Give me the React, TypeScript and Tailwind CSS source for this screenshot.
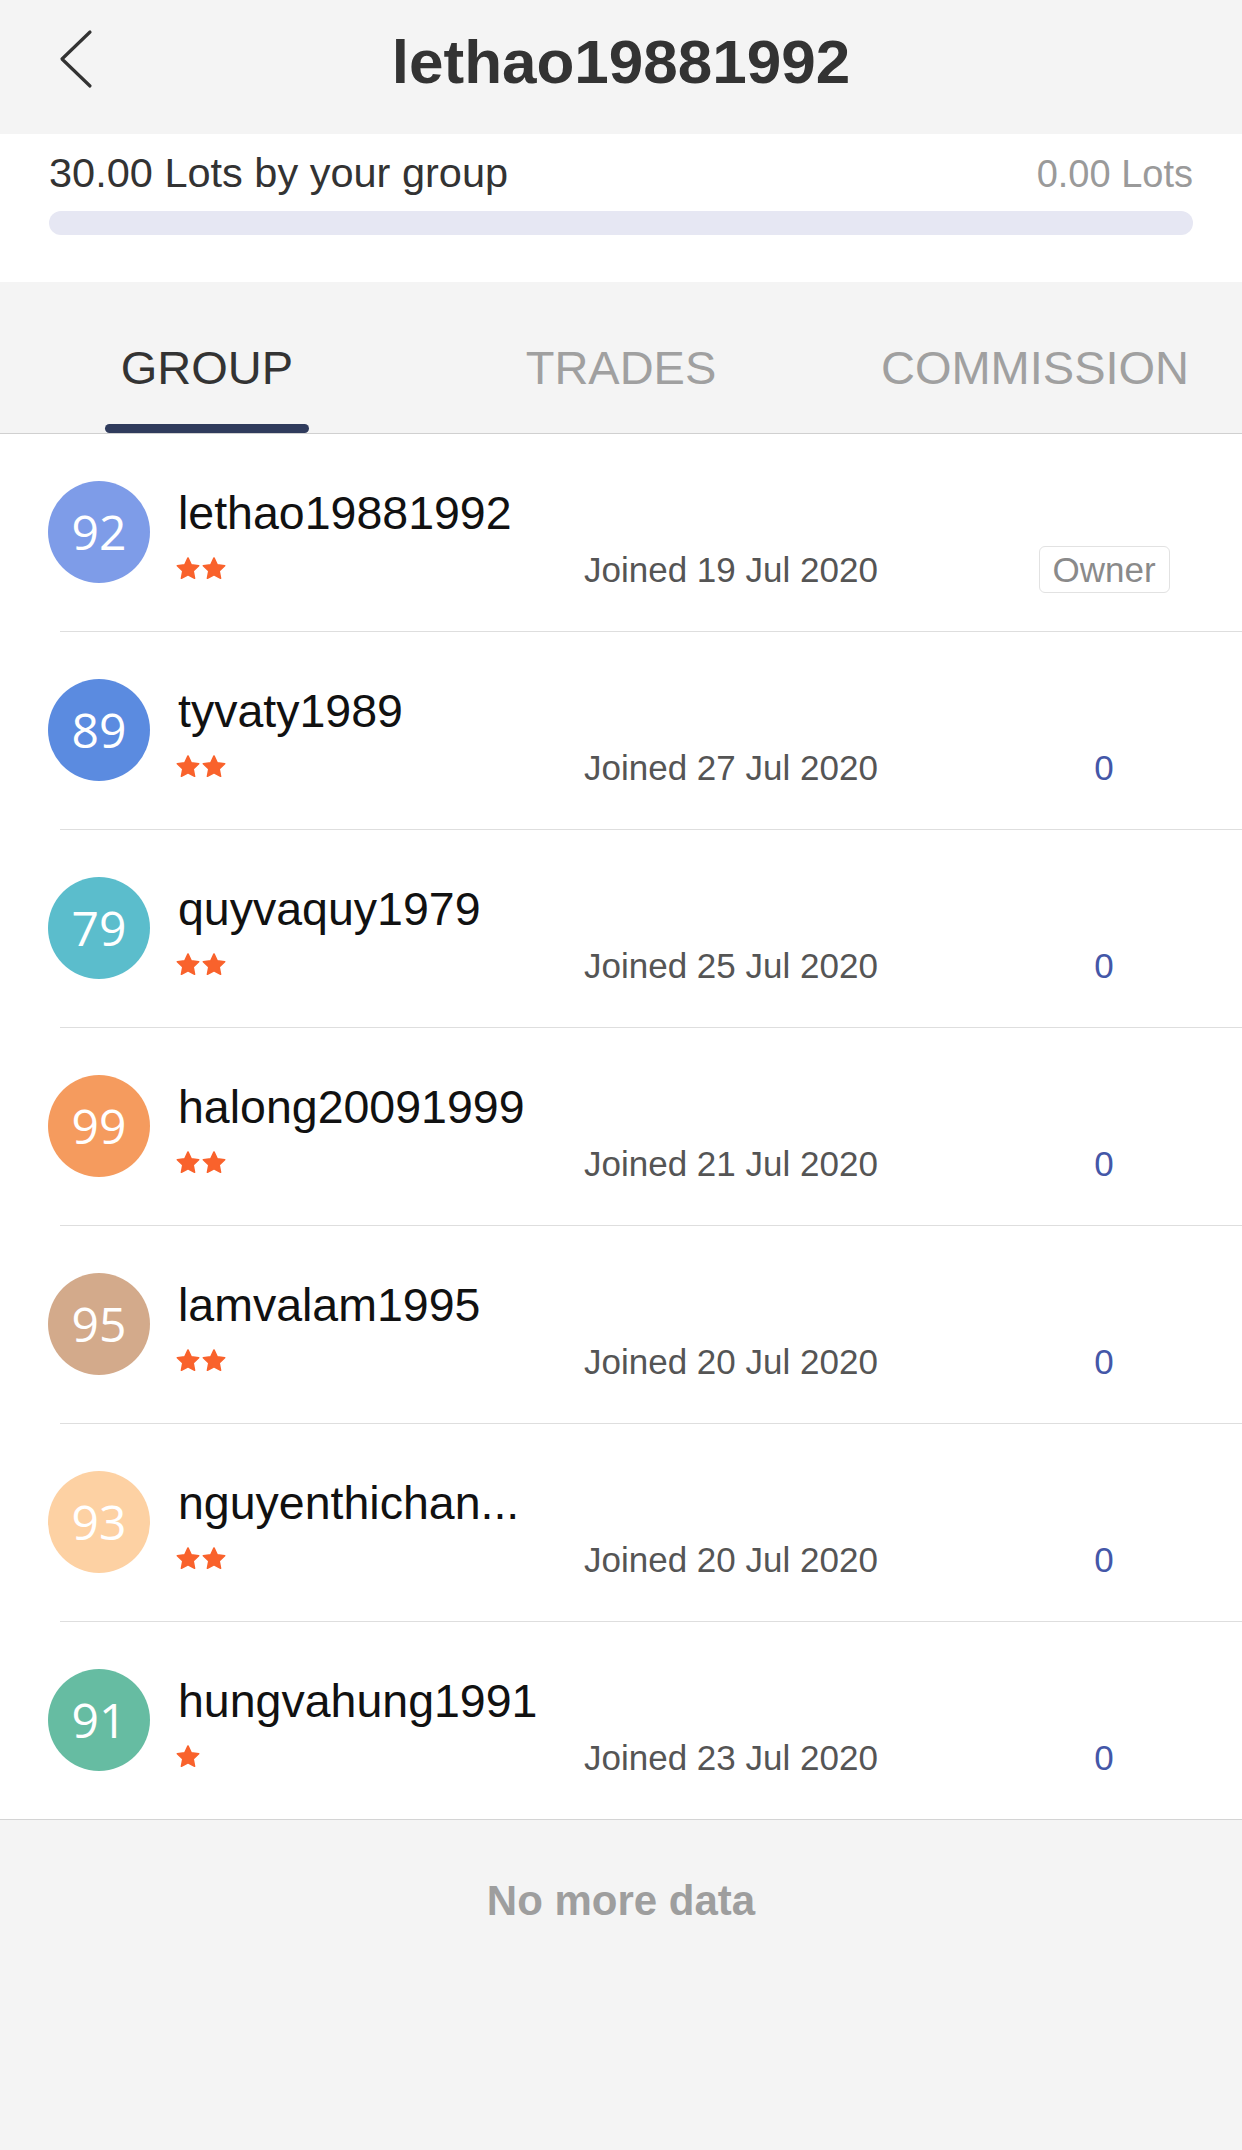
import React from 'react'

type Member = {
  level: number
  name: string
  stars: number
  joined: string
  color: string
  owner?: boolean
}

const members: Member[] = [
  { level: 92, name: 'lethao19881992', stars: 2, joined: 'Joined 19 Jul 2020', color: 'bg-[#7e9ce8]', owner: true },
  { level: 89, name: 'tyvaty1989', stars: 2, joined: 'Joined 27 Jul 2020', color: 'bg-[#5b8be0]' },
  { level: 79, name: 'quyvaquy1979', stars: 2, joined: 'Joined 25 Jul 2020', color: 'bg-[#5bbdcc]' },
  { level: 99, name: 'halong20091999', stars: 2, joined: 'Joined 21 Jul 2020', color: 'bg-[#f59b5e]' },
  { level: 95, name: 'lamvalam1995', stars: 2, joined: 'Joined 20 Jul 2020', color: 'bg-[#d3aa8b]' },
  { level: 93, name: 'nguyenthichan...', stars: 2, joined: 'Joined 20 Jul 2020', color: 'bg-[#fdd1a3]' },
  { level: 91, name: 'hungvahung1991', stars: 1, joined: 'Joined 23 Jul 2020', color: 'bg-[#66bca2]' },
]

const Star = () => (
  <svg width="26" height="26" viewBox="0 0 24 24" className="block">
    <path
      d="M12 1.8l3 6.3 6.9.9-5.1 4.8 1.3 6.8L12 17.3l-6.1 3.3 1.3-6.8L2.1 9l6.9-.9z"
      fill="#f9622c"
      stroke="#f9622c"
      strokeWidth="1.4"
      strokeLinejoin="round"
    />
  </svg>
)

function MemberRow({ member, last }: { member: Member; last: boolean }) {
  return (
    <div className="bg-white">
      <div className={'flex h-[197px] items-start pl-[48px] pt-[47px]'}>
        <div
          className={
            'flex h-[102px] w-[102px] shrink-0 items-center justify-center rounded-full text-[48px] leading-none text-white ' +
            member.color
          }
          style={{ fontFamily: '"Open Sans", sans-serif' }}
        >
          {member.level}
        </div>
        <div className="ml-[28px] mt-[9px] flex flex-col">
          <span className="text-[46.5px] leading-none text-[#111111]">{member.name}</span>
          <div className="mt-[15px] flex h-[35px] items-center">
            <div className="-ml-[3px] flex w-[409px] items-center">
              {Array.from({ length: member.stars }).map((_, i) => (
                <Star key={i} />
              ))}
            </div>
            <span className="w-[450px] text-[35px] leading-none text-[#555555]">
              {member.joined}
            </span>
            <div className="flex w-[140px] justify-center">
              {member.owner ? (
                <span className="flex h-[47px] w-[131px] items-center justify-center rounded-[6px] border border-[#e2e2e2] text-[35px] leading-none text-[#8a8a8a]">
                  Owner
                </span>
              ) : (
                <span className="text-[35px] leading-none text-[#4457a8]">0</span>
              )}
            </div>
          </div>
        </div>
      </div>
      {last ? (
        <div className="h-px bg-[#d4d4d4]" />
      ) : (
        <div className="ml-[60px] h-px bg-[#dedede]" />
      )}
    </div>
  )
}

export default function App() {
  return (
    <div
      className="flex min-h-[2150px] w-[1242px] flex-col bg-[#f4f4f4]"
      style={{ fontFamily: '"Liberation Sans", Arial, sans-serif' }}
    >
      {/* header */}
      <div className="flex h-[134px] items-start px-[59px]">
        <svg width="34" height="60" viewBox="0 0 34 60" className="mt-[29px] shrink-0">
          <path d="M31 3L3 30l28 27" fill="none" stroke="#333333" strokeWidth="3.2" strokeLinecap="round" strokeLinejoin="round" />
        </svg>
        <h1 className="flex-1 pr-[34px] pt-[31px] text-center text-[62px] font-bold leading-none text-[#333333]">
          lethao19881992
        </h1>
      </div>

      {/* lots progress */}
      <div className="h-[148px] bg-white px-[49px] pt-[18px]">
        <div className="flex items-baseline justify-between">
          <span className="text-[41.5px] leading-none text-[#333333]">30.00 Lots by your group</span>
          <span className="text-[38px] leading-none text-[#9a9a9a]">0.00 Lots</span>
        </div>
        <div className="mt-[17px] h-[24px] rounded-full bg-[#e6e7f3]" />
      </div>

      {/* tabs */}
      <div className="grid h-[152px] grid-cols-3 border-b border-[#d0d0d0]">
        {['GROUP', 'TRADES', 'COMMISSION'].map((tab, i) => (
          <div key={tab} className="flex h-full flex-col items-center">
            <span
              className={
                'pt-[62px] text-[47px] leading-none ' +
                (i === 0 ? 'text-[#333333]' : 'text-[#a0a0a0]')
              }
            >
              {tab}
            </span>
            {i === 0 && <div className="mt-auto h-[9px] w-[204px] rounded-full bg-[#2f3b5c]" />}
          </div>
        ))}
      </div>

      {/* members */}
      <div className="flex flex-col">
        {members.map((m, i) => (
          <MemberRow key={m.name} member={m} last={i === members.length - 1} />
        ))}
      </div>

      <div className="flex flex-1 justify-center pt-[60px]">
        <span className="text-[42px] font-bold leading-none text-[#9e9e9e]">No more data</span>
      </div>
    </div>
  )
}
